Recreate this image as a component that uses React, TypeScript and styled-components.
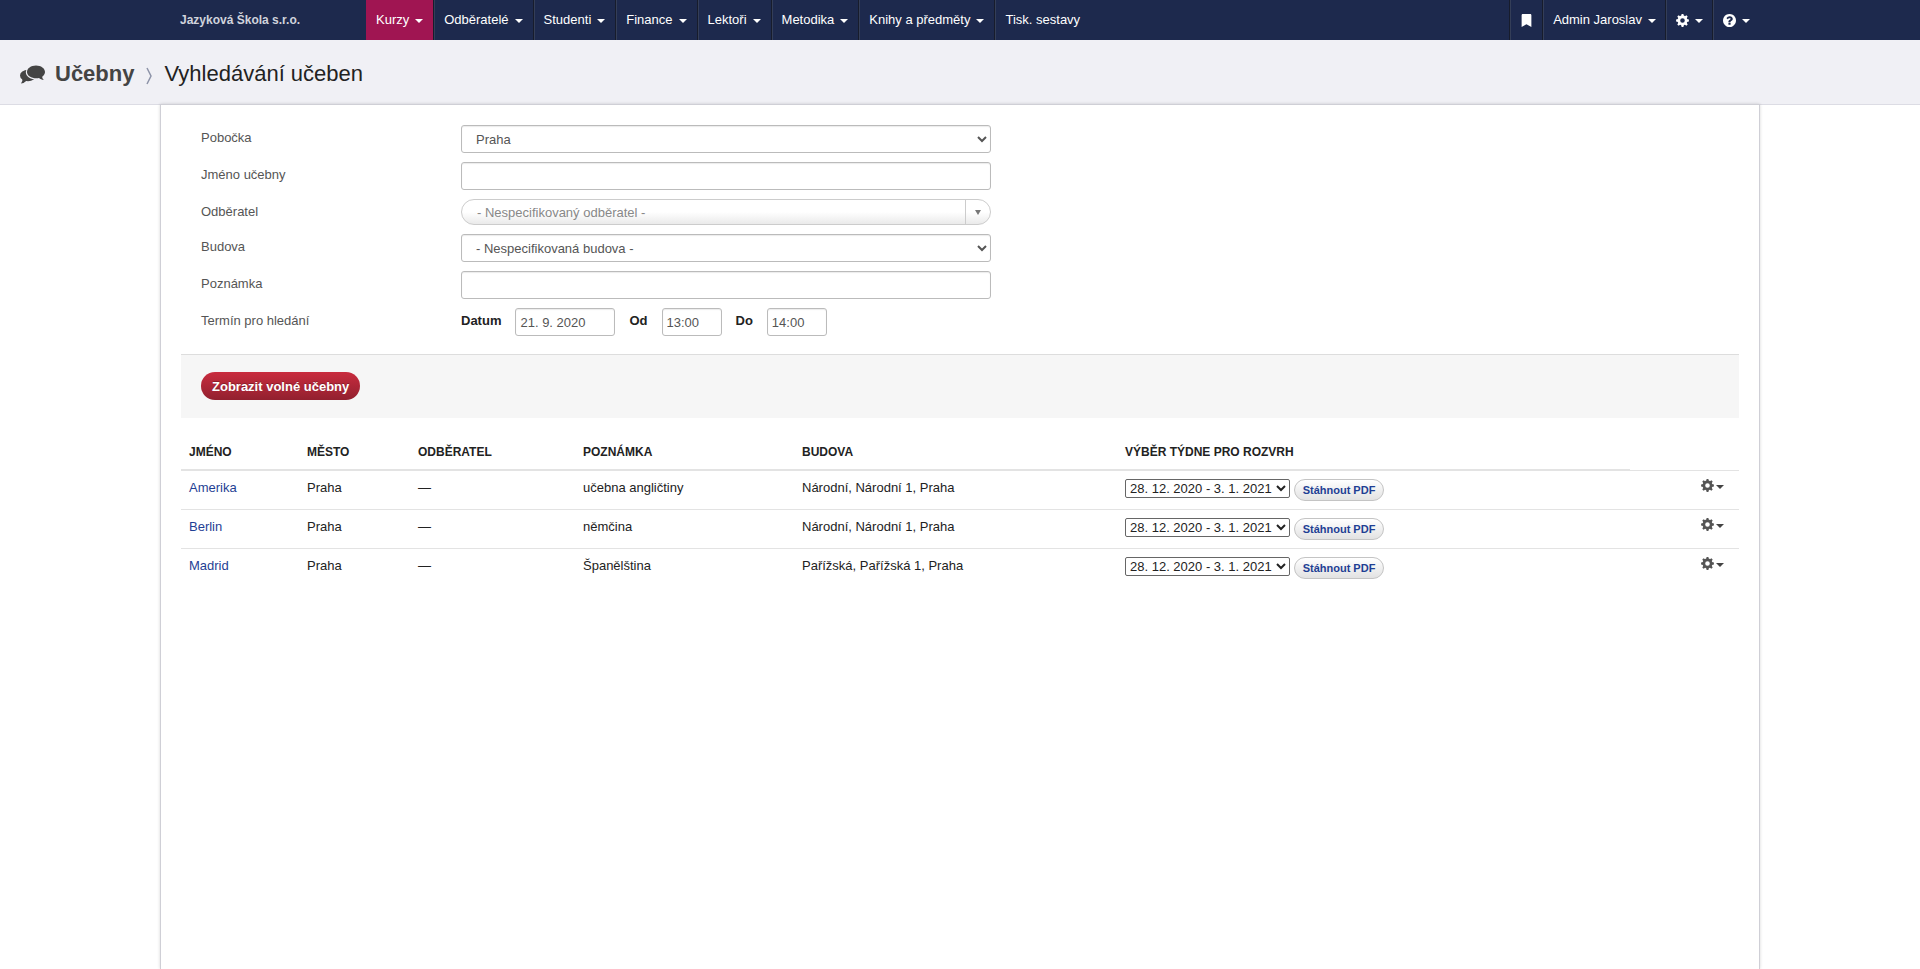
import React from 'react';
import styled, { createGlobalStyle, css } from 'styled-components';
import { FaBookmark } from 'react-icons/fa';

const GlobalStyle = createGlobalStyle`
  * { box-sizing: border-box; }
  body {
    margin: 0;
    background: #fff;
    color: #222;
    font: 13px/18px "Liberation Sans", Arial, sans-serif;
  }
  button, input, select { font-family: inherit; }
`;

const Page = styled.div`
  display: flex;
  flex-direction: column;
  min-height: 100vh;
`;

const NavBar = styled.nav`
  background: #1d294d;
  padding: 0 160px;
  height: 40px;
  display: flex;
`;

const Brand = styled.a`
  width: 206px;
  padding: 11px 20px;
  color: #d0d3dc;
  font-size: 12px;
  font-weight: bold;
  text-decoration: none;
  white-space: nowrap;
`;

const NavItem = styled.a<{ $active?: boolean; $last?: boolean }>`
  display: flex;
  align-items: center;
  gap: 6px;
  height: 40px;
  padding: 0 9px;
  color: #fff;
  text-decoration: none;
  white-space: nowrap;
  border-left: 1px solid #343e58;
  border-right: 1px solid #171c2c;
  ${(p) => p.$active && css`
    background: #a01552;
    border-left-color: #a01552;
  `}
  ${(p) => p.$last && css`border-right-color: transparent;`}
`;

const NavGroup = styled.div<{ $end?: boolean }>`
  display: flex;
  ${(p) => (p.$end
    ? css`margin-left: auto; border-left: 1px solid #171c2c;`
    : css`${NavItem} { padding-right: 10px; }`)}
`;

const Caret = styled.span<{ $dark?: boolean }>`
  margin-top: 2px;
  border: 4px solid transparent;
  border-top-color: ${(p) => (p.$dark ? '#444' : '#fff')};
  border-bottom: 0;
`;

const Header = styled.header`
  display: flex;
  align-items: center;
  height: 65px;
  padding: 4px 20px 0;
  background: #f0f0f5;
  border-bottom: 1px solid #dcdce4;
`;

const Section = styled.a`
  display: flex;
  align-items: center;
  gap: 10px;
  color: #444;
  font: bold 22px/30px "Liberation Sans", Arial, sans-serif;
  text-decoration: none;
`;

const Separator = styled.svg`
  margin: 3px 12px 0;
`;

const Title = styled.h1`
  margin: 0;
  font: 22px/30px "Liberation Sans", Arial, sans-serif;
`;

const Main = styled.main`
  flex: 1;
  margin: -1px 160px 0;
  padding: 20px 20px 0;
  background: #fff;
  border: 1px solid #cfcfd6;
  border-bottom: 0;
  box-shadow: 0 0 3px rgba(0, 0, 0, 0.16);
`;

const Fields = styled.div`
  display: grid;
  grid-template-columns: 260px 530px;
  row-gap: 9px;
  padding: 0 20px 18px;
`;

const Label = styled.label`
  color: #555;
  line-height: 26px;
`;

const field = css`
  height: 28px;
  border: 1px solid #bbb;
  border-radius: 3px;
  background: #fff;
  color: #555;
  font-size: 13px;
  box-shadow: inset 0 1px 1px rgba(0, 0, 0, 0.08);
`;

const Select = styled.select`
  ${field}
  width: 100%;
  padding: 4px 0 4px 10px;
`;

const Input = styled.input<{ $width?: number }>`
  ${field}
  width: ${(p) => (p.$width ? `${p.$width}px` : '100%')};
  padding: 4px;
`;

const Combo = styled.button`
  display: flex;
  align-items: stretch;
  width: 100%;
  height: 26px;
  padding: 0;
  border: 1px solid #ccc;
  border-radius: 13px;
  background: linear-gradient(#fff 50%, #eaeaea);
  color: #888;
  font-size: 13px;
  line-height: 25px;
  text-align: left;
`;

const ComboText = styled.span`
  flex: 1;
  padding-left: 15px;
  border-right: 1px solid #ccc;
`;

const ComboArrow = styled.span`
  display: flex;
  align-items: center;
  justify-content: center;
  width: 24px;
`;

const TermRow = styled.div`
  display: flex;
`;

const TermLabel = styled.label`
  margin-right: 14px;
  font-weight: bold;
  line-height: 25px;
  input + & { margin-left: 14px; }
`;

const Actions = styled.div`
  padding: 17px 20px 18px;
  background: #f6f6f6;
  border-top: 1px solid #ddd;
`;

const Primary = styled.button`
  display: block;
  height: 28px;
  padding: 0 11px;
  border: 0;
  border-radius: 14px;
  background: linear-gradient(#c92c3e, #92202f);
  color: #fff;
  font-size: 13px;
  font-weight: bold;
  text-shadow: 0 -1px 0 rgba(0, 0, 0, 0.25);
`;

const Table = styled.table`
  width: 100%;
  margin-top: 17px;
  border-spacing: 0;
  table-layout: fixed;
`;

const Th = styled.th`
  height: 35px;
  padding: 0 8px;
  border-bottom: 1px solid #e3e3e3;
  font-size: 12px;
  text-align: left;
  text-transform: uppercase;
  white-space: nowrap;
`;

const Td = styled.td`
  height: 39px;
  padding: 8px 8px 0;
  border-top: 1px solid #e3e3e3;
  vertical-align: top;
`;

const RoomLink = styled.a`
  color: #1f3f94;
  text-decoration: none;
`;

const Schedule = styled.div`
  display: flex;
  align-items: flex-start;
  gap: 4px;
`;

const WeekSelect = styled.select`
  width: 165px;
  height: 19px;
  padding: 0;
  border: 1px solid #666;
  border-radius: 2px;
  background: #fff;
  color: #222;
  font-size: 13px;
`;

const PdfButton = styled.button`
  height: 22px;
  width: 90px;
  padding: 0;
  border: 1px solid #c4c4c4;
  border-radius: 11px;
  background: linear-gradient(#fff, #e2e2e2);
  color: #1f3f94;
  font-size: 11px;
  font-weight: bold;
  white-space: nowrap;
`;

const RowMenu = styled.button`
  display: flex;
  align-items: center;
  gap: 2px;
  margin-left: auto;
  margin-right: 7px;
  padding: 0;
  border: 0;
  background: none;
  color: #555;
`;

const Gear = () => (
  <svg width="13" height="13" viewBox="-6.5 -6.5 13 13" fill="none" stroke="currentColor" aria-hidden="true">
    <circle r="3.6" strokeWidth="2.6" />
    {[0, 45, 90, 135, 180, 225, 270, 315].map((a) => (
      <path key={a} d="M-1.4 -4.4L-0.9 -6.4H0.9L1.4 -4.4Z" fill="currentColor" stroke="none" transform={`rotate(${a})`} />
    ))}
  </svg>
);

const Help = () => (
  <svg width="13" height="13" viewBox="0 0 1536 1536" aria-hidden="true">
    <path
      fill="#fff"
      d="M896 1248v-192q0-14-9-23t-23-9H672q-14 0-23 9t-9 23v192q0 14 9 23t23 9h192q14 0 23-9t9-23zm256-672q0-88-55.500-163T958 297t-170-41q-243 0-371 213-15 24 8 42l132 100q7 6 19 6 16 0 25-12 53-68 86-92 34-24 86-24 48 0 85.500 26t37.500 59q0 38-20 61t-68 45q-63 28-115.500 86.500T640 892v36q0 14 9 23t23 9h192q14 0 23-9t9-23q0-19 21.500-49.500T972 829q32-18 49-28.500t46-35 44.500-48 28-60.500T1152 576zm384 192q0 209-103 385.500T1153.500 1433 768 1536t-385.500-103T103 1153.500 0 768t103-385.500T382.500 103 768 0t385.500 103T1433 382.500 1536 768z"
    />
  </svg>
);

const Comments = () => (
  <svg width="25" height="22" viewBox="0 0 25 22" fill="#444" aria-hidden="true">
    <ellipse cx="8" cy="12.5" rx="8" ry="5.800" />
    <path d="M2.500 15.500Q2.800 18.500 1 20.500Q4.500 20 6.800 17.500Z" />
    <g stroke="#f0f0f5" strokeWidth="2.400" paintOrder="stroke" strokeLinejoin="round">
      <path d="M16 2.500c5 0 9 2.900 9 6.500 0 1.900-1.100 3.500-2.800 4.700.1 1.300.6 2.300 1.700 3.300-2.200-.1-3.700-.8-4.900-1.900-6.200 1-12-1.700-12-6.100 0-3.600 4-6.500 9-6.500Z" />
    </g>
  </svg>
);

const menu = ['Kurzy', 'Odběratelé', 'Studenti', 'Finance', 'Lektoři', 'Metodika', 'Knihy a předměty'];
const columns: [string, string][] = [
  ['Jméno', '118px'],
  ['Město', '111px'],
  ['Odběratel', '165px'],
  ['Poznámka', '219px'],
  ['Budova', '323px'],
  ['Výběr týdne pro rozvrh', 'auto'],
];
const rooms = [
  { name: 'Amerika', note: 'učebna angličtiny', building: 'Národní, Národní 1, Praha' },
  { name: 'Berlin', note: 'němčina', building: 'Národní, Národní 1, Praha' },
  { name: 'Madrid', note: 'Španělština', building: 'Pařížská, Pařížská 1, Praha' },
];

export default function App() {
  return (
    <Page>
      <GlobalStyle />
      <NavBar>
        <Brand href="#">Jazyková Škola s.r.o.</Brand>
        <NavGroup>
          {menu.map((m, i) => (
            <NavItem key={m} href="#" $active={i === 0}>{m}<Caret /></NavItem>
          ))}
          <NavItem href="#" $last>Tisk. sestavy</NavItem>
        </NavGroup>
        <NavGroup $end>
          <NavItem href="#" aria-label="Záložky"><FaBookmark size={13} /></NavItem>
          <NavItem href="#">Admin Jaroslav<Caret /></NavItem>
          <NavItem href="#" aria-label="Nastavení"><Gear /><Caret /></NavItem>
          <NavItem href="#" aria-label="Nápověda" $last><Help /><Caret /></NavItem>
        </NavGroup>
      </NavBar>
      <Header>
        <Section href="#"><Comments />Učebny</Section>
        <Separator width="6" height="18" viewBox="0 0 6 18" aria-hidden="true">
          <path d="M1 1L5 9L1 17" fill="none" stroke="#8d93a8" strokeWidth="1.500" />
        </Separator>
        <Title>Vyhledávání učeben</Title>
      </Header>
      <Main>
        <form onSubmit={(e) => e.preventDefault()}>
          <Fields>
            <Label htmlFor="branch">Pobočka</Label>
            <Select id="branch"><option>Praha</option></Select>
            <Label htmlFor="room">Jméno učebny</Label>
            <Input id="room" />
            <Label htmlFor="customer">Odběratel</Label>
            <Combo id="customer" type="button">
              <ComboText>- Nespecifikovaný odběratel -</ComboText>
              <ComboArrow>
                <svg width="6" height="5" viewBox="0 0 6 5" aria-hidden="true"><path d="M0 0H6L3 5Z" fill="#777" /></svg>
              </ComboArrow>
            </Combo>
            <Label htmlFor="building">Budova</Label>
            <Select id="building"><option>- Nespecifikovaná budova -</option></Select>
            <Label htmlFor="note">Poznámka</Label>
            <Input id="note" />
            <Label as="span">Termín pro hledání</Label>
            <TermRow>
              <TermLabel htmlFor="date">Datum</TermLabel>
              <Input id="date" $width={100} defaultValue="21. 9. 2020" />
              <TermLabel htmlFor="from">Od</TermLabel>
              <Input id="from" $width={60} defaultValue="13:00" />
              <TermLabel htmlFor="to">Do</TermLabel>
              <Input id="to" $width={60} defaultValue="14:00" />
            </TermRow>
          </Fields>
          <Actions><Primary type="submit">Zobrazit volné učebny</Primary></Actions>
        </form>
        <Table>
          <colgroup>
            {columns.map(([name, width]) => <col key={name} style={{ width }} />)}
            <col style={{ width: '109px' }} />
          </colgroup>
          <thead>
            <tr>{columns.map(([name]) => <Th key={name} scope="col">{name}</Th>)}</tr>
          </thead>
          <tbody>
            {rooms.map((r) => (
              <tr key={r.name}>
                <Td><RoomLink href="#">{r.name}</RoomLink></Td>
                <Td>Praha</Td>
                <Td>—</Td>
                <Td>{r.note}</Td>
                <Td>{r.building}</Td>
                <Td>
                  <Schedule>
                    <WeekSelect aria-label={`Týden pro rozvrh ${r.name}`}><option>28. 12. 2020 - 3. 1. 2021</option></WeekSelect>
                    <PdfButton type="button">Stáhnout PDF</PdfButton>
                  </Schedule>
                </Td>
                <Td>
                  <RowMenu type="button" aria-label={`Akce ${r.name}`}><Gear /><Caret $dark /></RowMenu>
                </Td>
              </tr>
            ))}
          </tbody>
        </Table>
      </Main>
    </Page>
  );
}
